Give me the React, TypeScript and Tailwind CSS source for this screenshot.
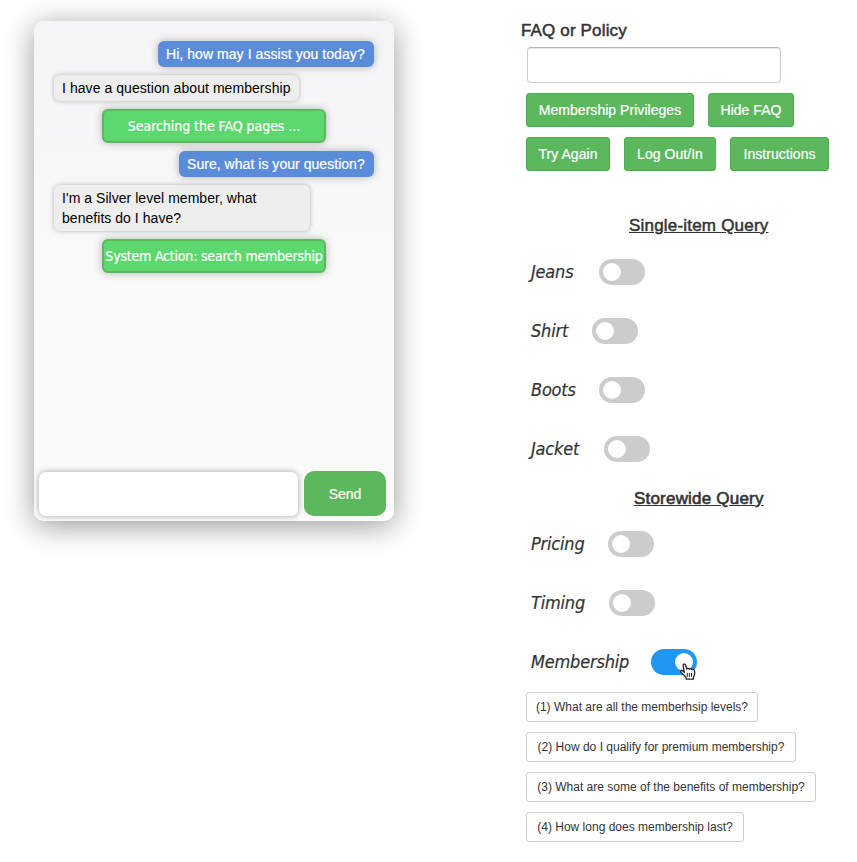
import type { ReactNode } from "react";

type Message = { from: "agent" | "customer" | "system"; text: string; fit: string };

const messages: Message[] = [
  { from: "agent", text: "Hi, how may I assist you today?", fit: "w-[216px] tracking-[0.06px]" },
  { from: "customer", text: "I have a question about membership", fit: "w-[245px] tracking-[0.06px]" },
  { from: "system", text: "Searching the FAQ pages ...", fit: "tracking-[-0.05px]" },
  { from: "agent", text: "Sure, what is your question?", fit: "w-[195px] tracking-[0.04px]" },
  { from: "customer", text: "I'm a Silver level member, what benefits do I have?", fit: "w-[256px] tracking-[0.04px]" },
  { from: "system", text: "System Action: search membership", fit: "tracking-[-0.2px]" },
];

const bubbleStyle = {
  agent:
    "self-end mr-5 px-2 py-[3px] bg-[#5b8cd9] text-white rounded-[6px] shadow-[0_0_8px_rgba(0,0,0,0.28)] whitespace-nowrap [-webkit-text-stroke:0.2px_white]",
  customer:
    "self-start ml-5 px-2 py-[3px] bg-[#eeeeee] text-black rounded-[6px] shadow-[0_0_5px_rgba(0,0,0,0.28)]",
  system:
    "self-center w-56 h-[34px] flex items-center justify-center leading-[30px] whitespace-nowrap bg-[#5cd86e] text-white border-2 border-[#5cb85c] rounded-[6px] shadow-[0_0_8px_rgba(0,0,0,0.28)] font-['DejaVu_Sans_Condensed','DejaVu_Sans',sans-serif] [font-stretch:condensed] [-webkit-text-stroke:0.2px_white]",
};

function Chat() {
  return (
    <section className="ml-[34px] mt-[21px] flex h-[500px] w-[360px] shrink-0 flex-col rounded-[10px] bg-linear-to-b from-[#f5f5f8] via-[#f9f9f9] to-[#fbfbfb] shadow-[0_5px_30px_rgba(0,0,0,0.4)]">
      <div className="flex flex-1 flex-col gap-2 pt-5 text-[14px] leading-5">
        {messages.map((m) => (
          <div key={m.text} className={`${bubbleStyle[m.from]} ${m.fit}`}>
            {m.text}
          </div>
        ))}
      </div>
      <form className="mb-[5px] flex h-[45px] pl-[5px]">
        <input
          aria-label="Message"
          className="mt-px h-11 w-[259px] rounded-[7px] bg-white px-3 shadow-[0_0_6px_rgba(0,0,0,0.35)] outline-none"
        />
        <button
          type="button"
          className="ml-[6px] h-[45px] w-[82px] rounded-[10px] bg-[#5cb85c] pt-px text-[14px] text-white [-webkit-text-stroke:0.2px_white]"
        >
          Send
        </button>
      </form>
    </section>
  );
}

function GreenButton({ children, width }: { children: ReactNode; width: string }) {
  return (
    <button
      className={`h-[34px] ${width} whitespace-nowrap rounded-[3px] border border-[#4cae4c] bg-[#5cb85c] text-[14px] leading-5 tracking-[0.04px] text-white [-webkit-text-stroke:0.2px_white]`}
    >
      {children}
    </button>
  );
}

function HandCursor() {
  return (
    <svg className="absolute left-[29px] top-[14px] h-[17px] w-[16px]" viewBox="0 0 16 17">
      <path
        d="M4.4 9.6 3.2 3.2C2.8.8 5 .2 5.6 2.2l1.2 3.9c.3-1.1 2.2-1 2.5.2.5-1 2.2-.7 2.5.4.8-.8 2.5-.3 2.7 1l.2 2.6c0 1.4-.5 2.4-1.1 3.4l-.2 2.5H6.3L6 14.2C4.8 13 3.3 11.7 1.3 9.6-.2 7.8 1.3 6.6 2.7 7.9Z"
        fill="#fff"
        stroke="#222"
        strokeWidth="1.3"
        strokeLinejoin="round"
      />
      <path d="M7.3 9.8v4M9.4 9.8v4M11.5 9.8v4" stroke="#222" strokeWidth="1" />
    </svg>
  );
}

function ToggleRow({ label, width, on = false }: { label: string; width: string; on?: boolean }) {
  return (
    <div className="ml-[10px] flex h-[26px] items-center">
      <span
        className={`${width} shrink-0 whitespace-nowrap font-['DejaVu_Sans_Condensed','DejaVu_Sans',sans-serif] text-[18px] leading-[26px] tracking-[-0.2px] italic [font-stretch:condensed] [-webkit-text-stroke:0.2px_#333]`}
      >
        {label}
      </span>
      <span
        role="switch"
        aria-checked={on}
        className={`relative flex h-[26px] w-[46px] shrink-0 items-center rounded-full px-1 ${on ? "justify-end bg-[#2196f3]" : "bg-[#cccccc]"}`}
      >
        <span className="size-[18px] rounded-full bg-white" />
        {on && <HandCursor />}
      </span>
    </div>
  );
}

function Question({ children, width }: { children: ReactNode; width: string }) {
  return (
    <button
      className={`h-[30px] ${width} whitespace-nowrap rounded-[3px] border border-[#cccccc] bg-white text-[12px] leading-[18px]`}
    >
      {children}
    </button>
  );
}

export default function App() {
  return (
    <main className="flex h-[862px] w-[857px] overflow-hidden bg-white font-['Liberation_Sans',Arial,sans-serif] text-[#333333]">
      <Chat />
      <section className="ml-[127px] flex w-[336px] flex-col">
        <h2 className="mt-[21px] h-5 whitespace-nowrap text-[17px] leading-5 tracking-[0.15px] [-webkit-text-stroke:0.5px_#333]">
          FAQ or Policy
        </h2>
        <input
          aria-label="FAQ or Policy"
          className="ml-[6px] mt-[6px] h-9 w-[254px] rounded-[4px] border border-[#cccccc] border-t-[#b5b5b5] px-3 shadow-[inset_0_1px_1px_rgba(0,0,0,0.1)] outline-none"
        />
        <div className="ml-[5px] mt-[10px] flex gap-[14px]">
          <GreenButton width="w-[168px]">Membership Privileges</GreenButton>
          <GreenButton width="w-[86px]">Hide FAQ</GreenButton>
        </div>
        <div className="ml-[5px] mt-[10px] flex gap-[14px]">
          <GreenButton width="w-[84px]">Try Again</GreenButton>
          <GreenButton width="w-[92px]">Log Out/In</GreenButton>
          <GreenButton width="w-[99px]">Instructions</GreenButton>
        </div>
        <h3 className="ml-[108px] mt-[45px] h-5 whitespace-nowrap text-[17px] leading-5 tracking-[0.2px] underline [-webkit-text-stroke:0.5px_#333]">
          Single-item Query
        </h3>
        <div className="mt-[23px] flex flex-col gap-[33px]">
          <ToggleRow label="Jeans" width="w-[68px]" />
          <ToggleRow label="Shirt" width="w-[61px]" />
          <ToggleRow label="Boots" width="w-[68px]" />
          <ToggleRow label="Jacket" width="w-[73px]" />
        </div>
        <h3 className="ml-[113px] mt-[27px] h-5 whitespace-nowrap text-[17px] leading-5 tracking-[0.2px] underline [-webkit-text-stroke:0.6px_#333]">
          Storewide Query
        </h3>
        <div className="mt-[22px] flex flex-col gap-[33px]">
          <ToggleRow label="Pricing" width="w-[77px]" />
          <ToggleRow label="Timing" width="w-[78px]" />
          <ToggleRow label="Membership" width="w-[120px]" on />
        </div>
        <div className="ml-[5px] mt-[17px] flex flex-col items-start gap-[10px]">
          <Question width="w-[232px]">(1) What are all the memberhsip levels?</Question>
          <Question width="w-[270px]">(2) How do I qualify for premium membership?</Question>
          <Question width="w-[290px]">(3) What are some of the benefits of membership?</Question>
          <Question width="w-[218px]">(4) How long does membership last?</Question>
        </div>
      </section>
    </main>
  );
}
